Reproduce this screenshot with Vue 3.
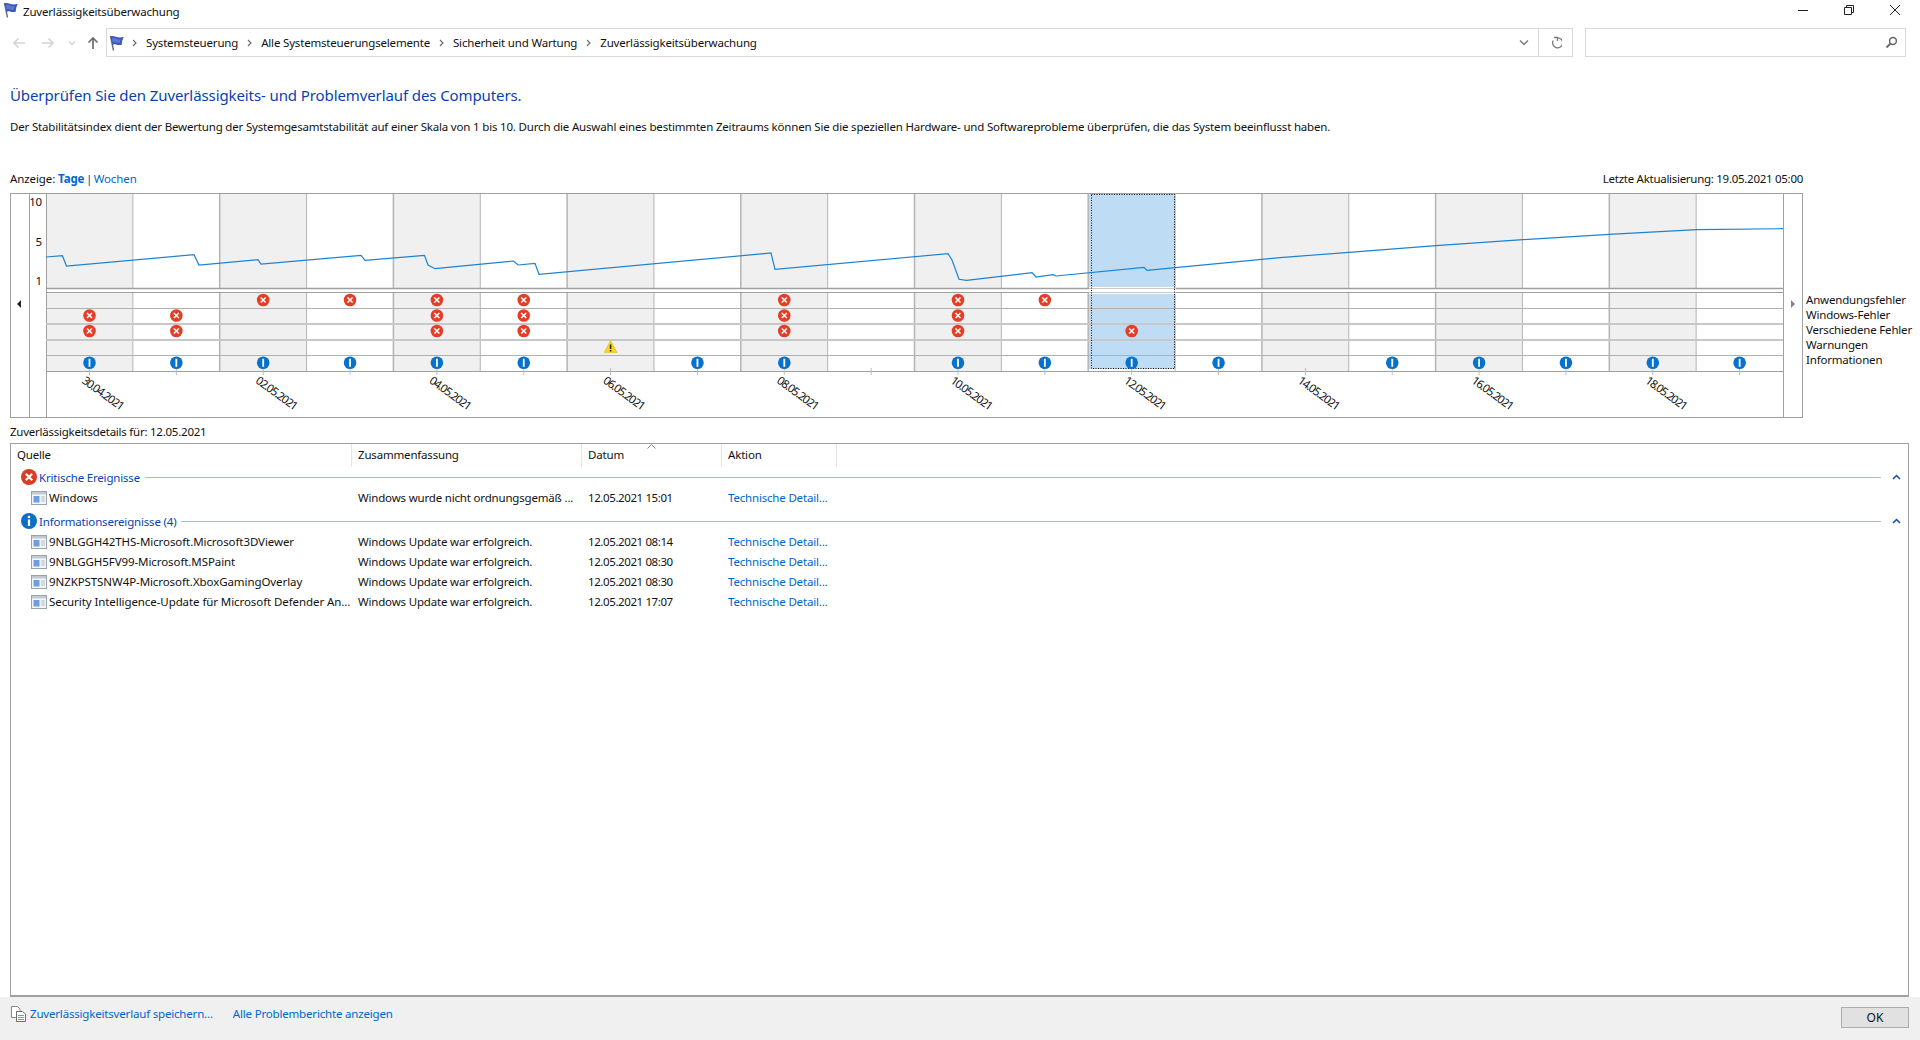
<script setup>
const P = 86.85
const X0 = 46
const cols = Array.from({ length: 20 }, (_, i) => i)
const cx = (i) => X0 + P * i + 43.5
const colX = (i) => X0 + P * i
const dates = ['30.04.2021', '02.05.2021', '04.05.2021', '06.05.2021', '08.05.2021', '10.05.2021', '12.05.2021', '14.05.2021', '16.05.2021', '18.05.2021']
const hLines = [
  { y: 288.5, c: '#a0a0a0', w: 1.5 },
  { y: 292.5, c: '#a0a0a0', w: 1 },
  { y: 308.5, c: '#b0b0b0', w: 1 },
  { y: 324, c: '#c8c8c8', w: 2 },
  { y: 340, c: '#c8c8c8', w: 2 },
  { y: 355.5, c: '#b0b0b0', w: 1 },
  { y: 371.5, c: '#a0a0a0', w: 1 }
]
const errorRows = [
  { y: 300, items: [2, 3, 4, 5, 8, 10, 11] },
  { y: 315.5, items: [0, 1, 4, 5, 8, 10] },
  { y: 331, items: [0, 1, 4, 5, 8, 10, 12] }
]
const errors = errorRows.flatMap((r) => r.items.map((i) => ({ x: cx(i), y: r.y })))
const infos = [0, 1, 2, 3, 4, 5, 7, 8, 10, 11, 12, 13, 15, 16, 17, 18, 19].map((i) => cx(i))
const line = '46,257 62.4,255.7 66.5,266 194,254.7 199,265 258,259.7 261,264 361,255.3 365,260.3 424.5,255.3 428,265 435,268.7 513.5,261 518,265 535,263.3 539,274.3 771,253 775,269.3 948,253.7 952,260 959,279.3 966.5,280.3 1032,272.7 1036,277 1053,274.7 1056,276 1144,267.3 1147,270.3 1280,257.7 1349,252.3 1436,245.7 1523,239.7 1609,234.3 1697,229.7 1783,228.7'
const legend = ['Anwendungsfehler', 'Windows-Fehler', 'Verschiedene Fehler', 'Warnungen', 'Informationen']
const crit = [{ src: 'Windows', sum: 'Windows wurde nicht ordnungsgemäß ...', date: '12.05.2021 15:01' }]
const info = [
  { src: '9NBLGGH42THS-Microsoft.Microsoft3DViewer', sum: 'Windows Update war erfolgreich.', date: '12.05.2021 08:14' },
  { src: '9NBLGGH5FV99-Microsoft.MSPaint', sum: 'Windows Update war erfolgreich.', date: '12.05.2021 08:30' },
  { src: '9NZKPSTSNW4P-Microsoft.XboxGamingOverlay', sum: 'Windows Update war erfolgreich.', date: '12.05.2021 08:30' },
  { src: 'Security Intelligence-Update für Microsoft Defender An...', sum: 'Windows Update war erfolgreich.', date: '12.05.2021 17:07' }
]
const crumbs = ['Systemsteuerung', 'Alle Systemsteuerungselemente', 'Sicherheit und Wartung', 'Zuverlässigkeitsüberwachung']
</script>

<template>
  <div class="app">
    <header class="titlebar">
      <svg class="flag" width="15" height="16" viewBox="0 0 15 16">
        <path d="M1.500 1 L4.500 15.500" stroke="#69707c" stroke-width="1.400" fill="none" />
        <path d="M1.500 1.500 C5 -.5 8 4 14.800 1.800 C13.500 5 12.500 7 13 9.500 C8 11.500 6 7.500 3.500 10.500 Z" fill="#3b57ba" />
        <path d="M3 3 C6 2 8 5 12 4.500 C11 6 10.800 7 10.800 8 C8 8 6 6 3.500 7.500 Z" fill="#5a78d2" />
      </svg>
      <span class="title">Zuverlässigkeitsüberwachung</span>
      <div class="winctl">
        <svg width="12" height="12" viewBox="0 0 12 12"><path d="M1 6.500H11" stroke="#222" /></svg>
        <svg width="12" height="12" viewBox="0 0 12 12"><path d="M1.500 3.500H8.500V10.500H1.500Z M3.500 3.500V1.500H10.500V8.500H8.500" stroke="#222" fill="none" /></svg>
        <svg width="12" height="12" viewBox="0 0 12 12"><path d="M1 1L11 11M11 1L1 11" stroke="#222" /></svg>
      </div>
    </header>

    <nav class="navbar">
      <div class="navbtns">
        <svg width="14" height="12" viewBox="0 0 14 12"><path d="M13 6H2M6.500 1.500L2 6l4.500 4.500" stroke="#d2d2d2" stroke-width="1.600" fill="none" /></svg>
        <svg class="fwd" width="14" height="12" viewBox="0 0 14 12"><path d="M1 6H12M7.500 1.500L12 6l-4.500 4.500" stroke="#d2d2d2" stroke-width="1.600" fill="none" /></svg>
        <svg class="more" width="8" height="6" viewBox="0 0 8 6"><path d="M1 1.500L4 4.500L7 1.500" stroke="#d2d2d2" stroke-width="1.300" fill="none" /></svg>
        <svg class="up" width="12" height="14" viewBox="0 0 12 14"><path d="M6 13V2M1.500 6.500L6 2l4.500 4.500" stroke="#6e6e6e" stroke-width="1.700" fill="none" /></svg>
      </div>
      <div class="address">
        <svg class="addrflag" width="15" height="16" viewBox="0 0 15 16">
          <path d="M1.500 1 L4.500 15.500" stroke="#69707c" stroke-width="1.400" fill="none" />
          <path d="M1.500 1.500 C5 -.5 8 4 14.800 1.800 C13.500 5 12.500 7 13 9.500 C8 11.500 6 7.500 3.500 10.500 Z" fill="#3b57ba" />
          <path d="M3 3 C6 2 8 5 12 4.500 C11 6 10.800 7 10.800 8 C8 8 6 6 3.500 7.500 Z" fill="#5a78d2" />
        </svg>
        <template v-for="c in crumbs" :key="c">
          <svg class="chev" width="5" height="8" viewBox="0 0 5 8"><path d="M1 1L4 4L1 7" stroke="#6d6d6d" stroke-width="1.200" fill="none" /></svg>
          <span class="crumb">{{ c }}</span>
        </template>
        <span class="spacer"></span>
        <svg class="dd" width="10" height="7" viewBox="0 0 10 7"><path d="M1 1.500L5 5.500L9 1.500" stroke="#7a7a7a" stroke-width="1.500" fill="none" /></svg>
        <div class="refresh">
          <svg width="12" height="13" viewBox="0 0 12 13"><path d="M3 1.500H6.500V5M6.500 1.800A5 5 0 1 1 2.200 4.500" stroke="#7a7a7a" stroke-width="1.300" fill="none" transform="translate(1 0)" /></svg>
        </div>
      </div>
      <div class="search">
        <svg width="13" height="13" viewBox="0 0 13 13"><circle cx="8" cy="5" r="3.400" stroke="#666" stroke-width="1.500" fill="none" /><path d="M5.500 7.500L1.500 11.500" stroke="#666" stroke-width="1.800" /></svg>
      </div>
    </nav>

    <main class="content">
      <h1 class="heading">Überprüfen Sie den Zuverlässigkeits- und Problemverlauf des Computers.</h1>
      <p class="desc">Der Stabilitätsindex dient der Bewertung der Systemgesamtstabilität auf einer Skala von 1 bis 10. Durch die Auswahl eines bestimmten Zeitraums können Sie die speziellen Hardware- und Softwareprobleme überprüfen, die das System beeinflusst haben.</p>

      <div class="viewbar">
        <span class="viewsel">Anzeige: <b class="link strong">Tage</b><span class="pipe">|</span><span class="link">Wochen</span></span>
        <span class="updated">Letzte Aktualisierung: 19.05.2021 05:00</span>
      </div>

      <div class="chartrow">
        <svg class="chart" width="1793" height="225" viewBox="10 193 1793 225">
          <rect x="10.500" y="193.500" width="1792" height="224" fill="#fff" stroke="#a0a0a0" />
          <template v-for="i in cols" :key="'s' + i">
            <template v-if="i % 2 === 0 && i !== 12">
              <rect :x="colX(i)" y="194" :width="P" height="94" fill="#f0f0f0" />
              <rect :x="colX(i)" y="293" :width="P" height="78" fill="#f0f0f0" />
            </template>
          </template>
          <rect x="1089" y="194" width="86.500" height="93" fill="#bedcf4" />
          <rect x="1089" y="294" width="86.500" height="75" fill="#bedcf4" />

          <path d="M29.500 194V417M46.500 194V417M1783.500 194V417" stroke="#a0a0a0" />
          <template v-for="i in 21" :key="'v' + i">
            <template v-if="i - 1 > 0 && i - 1 < 20">
              <path :d="`M${colX(i - 1)} 194V288M${colX(i - 1)} 293V371`" stroke="#b4b4b4" :stroke-width="i % 2 ? 1.500 : 1" />
            </template>
          </template>
          <path v-for="l in hLines" :key="l.y" :d="`M46 ${l.y}H1783`" :stroke="l.c" :stroke-width="l.w" />
          <path v-for="i in cols" :key="'t' + i" :d="`M${cx(i)} 368V375`" stroke="#bcbcbc" />

          <rect x="1089" y="287" width="86.500" height="7" fill="#fff" />
          <path d="M1089 288.500H1175.500M1089 292.500H1175.500" stroke="#c9c9c9" />
          <rect x="1091.500" y="194.500" width="83" height="174" fill="none" stroke="#000" stroke-width="1" stroke-dasharray="1 1.500" />

          <polyline :points="line" fill="none" stroke="#1c82d4" stroke-width="1.200" />

          <text class="axis" x="42" y="206" text-anchor="end">10</text>
          <text class="axis" x="42" y="246" text-anchor="end">5</text>
          <text class="axis" x="42" y="285" text-anchor="end">1</text>
          <path d="M21 300V308L17 304Z" fill="#222" />
          <path d="M1791 300V308L1795 304Z" fill="#808080" />

          <g v-for="(e, k) in errors" :key="'e' + k" :transform="`translate(${e.x} ${e.y})`">
            <circle r="6.300" fill="#e23f26" />
            <path d="M-2.500 -2.500L2.500 2.500M2.500 -2.500L-2.500 2.500" stroke="#fff" stroke-width="1.500" />
          </g>
          <g :transform="`translate(${cx(6)} 347)`">
            <path d="M0 -6.500L6.500 5.500H-6.500Z" fill="#fbd11d" stroke="#dcae10" stroke-width=".5" />
            <path d="M0 -2.500V2M0 3V4.500" stroke="#222" stroke-width="1.500" />
          </g>
          <g v-for="x in infos" :key="'i' + x" :transform="`translate(${x} 362.800)`">
            <circle r="6.300" fill="#0872ca" />
            <path d="M0 -4V4" stroke="#fff" stroke-width="1.800" />
          </g>

          <text
            v-for="(d, k) in dates"
            :key="d"
            class="date"
            :x="cx(k * 2) - 6"
            y="383"
            :transform="`rotate(36 ${cx(k * 2) - 6} 379)`"
          >{{ d }}</text>
        </svg>
        <ul class="legend">
          <li v-for="l in legend" :key="l">{{ l }}</li>
        </ul>
      </div>

      <div class="detailslabel">Zuverlässigkeitsdetails für: 12.05.2021</div>

      <section class="list">
        <div class="head grid">
          <div class="hc">Quelle</div>
          <div class="hc">Zusammenfassung</div>
          <div class="hc sortcell">Datum
            <svg class="sort" width="9" height="5" viewBox="0 0 9 5"><path d="M.5 4.500L4.500 .5L8.500 4.500" stroke="#888" fill="none" /></svg>
          </div>
          <div class="hc">Aktion</div>
        </div>

        <div class="group">
          <svg width="16" height="16" viewBox="0 0 16 16"><circle cx="8" cy="8" r="8" fill="#dc3a22" /><path d="M4.800 4.800L11.200 11.200M11.200 4.800L4.800 11.200" stroke="#fff" stroke-width="2.200" /></svg>
          <span class="gname">Kritische Ereignisse</span>
          <span class="gline"></span>
          <svg class="gcaret" width="9" height="6" viewBox="0 0 9 6"><path d="M1 5L4.500 1.500L8 5" stroke="#0f4fa8" stroke-width="1.500" fill="none" /></svg>
        </div>
        <div v-for="r in crit" :key="r.src" class="row grid first">
          <div class="src">
            <svg width="16" height="14" viewBox="0 0 16 14"><rect x=".5" y=".5" width="15" height="13" fill="#f4f6f9" stroke="#9aa3ad" /><rect x="1" y="1" width="14" height="2.500" fill="#c3c9d1" /><rect x="2.500" y="5" width="6" height="6.500" fill="#6d9fe0" /><path d="M10 6H14M10 8H14M10 10H14" stroke="#b4bcc6" /></svg>
            <span>{{ r.src }}</span>
          </div>
          <div class="cell">{{ r.sum }}</div>
          <div class="cell when">{{ r.date }}</div>
          <div class="cell link">Technische Detail...</div>
        </div>

        <div class="group second">
          <svg width="16" height="16" viewBox="0 0 16 16"><circle cx="8" cy="8" r="8" fill="#0b6fc6" /><circle cx="8" cy="4" r="1.300" fill="#fff" /><path d="M8 6.500V13" stroke="#fff" stroke-width="2.200" /></svg>
          <span class="gname">Informationsereignisse (4)</span>
          <span class="gline"></span>
          <svg class="gcaret" width="9" height="6" viewBox="0 0 9 6"><path d="M1 5L4.500 1.500L8 5" stroke="#0f4fa8" stroke-width="1.500" fill="none" /></svg>
        </div>
        <div v-for="(r, k) in info" :key="r.src" class="row grid" :class="{ first: k === 0 }">
          <div class="src">
            <svg width="16" height="14" viewBox="0 0 16 14"><rect x=".5" y=".5" width="15" height="13" fill="#f4f6f9" stroke="#9aa3ad" /><rect x="1" y="1" width="14" height="2.500" fill="#c3c9d1" /><rect x="2.500" y="5" width="6" height="6.500" fill="#6d9fe0" /><path d="M10 6H14M10 8H14M10 10H14" stroke="#b4bcc6" /></svg>
            <span>{{ r.src }}</span>
          </div>
          <div class="cell">{{ r.sum }}</div>
          <div class="cell when">{{ r.date }}</div>
          <div class="cell link">Technische Detail...</div>
        </div>
      </section>
    </main>

    <footer class="footer">
      <svg class="docicon" width="15" height="16" viewBox="0 0 15 16">
        <path d="M.5 .5H6.500L9 3V11.500H.5Z" fill="#fff" stroke="#8a8a8a" />
        <path d="M5.500 5.500H11.500L14.500 8V15.500H5.500Z" fill="#fff" stroke="#6f6f6f" />
        <path d="M7 9.500H13M7 11.500H13M7 13.500H13" stroke="#6d9bd6" />
      </svg>
      <span class="link flink">Zuverlässigkeitsverlauf speichern...</span>
      <span class="link flink two">Alle Problemberichte anzeigen</span>
      <span class="spacer"></span>
      <button class="ok" type="button">OK</button>
    </footer>
  </div>
</template>

<style>
html, body { margin: 0; background: #fff; }
</style>

<style scoped>
.app {
  width: 1920px;
  height: 1040px;
  display: flex;
  flex-direction: column;
  overflow: hidden;
  background: #fff;
  color: #111;
  font-family: "Noto Sans", "Liberation Sans", sans-serif;
  font-size: 11.5px;
  letter-spacing: -0.18px;
}
.titlebar { height: 28px; flex: none; display: flex; align-items: flex-start; padding-left: 3px; }
.flag { margin-top: 2px; }
.title { margin-left: 5px; line-height: 24px; }
.winctl { margin-left: auto; display: flex; gap: 34px; padding: 4px 19px 0 0; }
.navbar { height: 29px; flex: none; display: flex; align-items: stretch; }
.navbtns { width: 106px; flex: none; display: flex; align-items: center; padding-left: 12px; box-sizing: border-box; }
.fwd { margin-left: 15px; }
.more { margin-left: 13px; }
.up { margin-left: 11px; }
.address {
  width: 1467px; box-sizing: border-box; flex: none;
  border: 1px solid #d9d9d9; display: flex; align-items: center; padding-left: 2px;
}
.addrflag { margin-right: 8px; }
.chev { margin: 0 9px 0 0; }
.crumb { margin-right: 9px; }
.spacer { flex: 1; }
.dd { margin-right: 9px; }
.refresh { width: 33px; height: 100%; border-left: 1px solid #d9d9d9; display: flex; align-items: center; justify-content: center; }
.search {
  margin-left: 12px; width: 321px; box-sizing: border-box;
  border: 1px solid #d9d9d9; display: flex; align-items: center; justify-content: flex-end; padding-right: 7px;
}
.content { flex: 1; min-height: 0; display: flex; flex-direction: column; padding: 0 11px 0 10px; }
.heading { margin: 27px 0 0; font-size: 15px; font-weight: 400; line-height: 22px; color: #0a3fb0; letter-spacing: -0.1px; }
.desc { margin: 13px 0 0; line-height: 16px; white-space: nowrap; }
.viewbar { margin-top: 36px; width: 1793px; line-height: 16px; display: flex; justify-content: space-between; }
.viewsel { letter-spacing: -0.1px; }
.pipe { margin: 0 1.5px; color: #0b3f8e; }
.updated { letter-spacing: -0.28px; }
.link { color: #0066cc; }
.strong { font-weight: 700; }
.chartrow { margin-top: 6px; display: flex; height: 225px; flex: none; }
.chart { flex: none; display: block; }
.axis { font-size: 11.500px; fill: #111; }
.date { font-size: 11.500px; fill: #111; letter-spacing: -1.1px; }
.legend { list-style: none; margin: 99px 0 0 3px; padding: 0; line-height: 15px; white-space: nowrap; }
.detailslabel { margin-top: 6px; line-height: 16px; letter-spacing: -0.24px; }
.list { margin-top: 3px; flex: 1; min-height: 0; border: 1px solid #a0a0a0; border-width: 1px 1px 2px 1px; box-sizing: border-box; }
.grid { display: grid; grid-template-columns: 341px 230px 140px 115px; }
.head { height: 23px; }
.hc { padding-left: 6px; line-height: 22px; border-right: 1px solid #e5e5e5; position: relative; }
.sort { position: absolute; left: 65px; top: 0; }
.group { height: 20px; display: flex; align-items: center; padding-left: 10px; }
.group.second { margin-top: 3px; }
.gname { margin-left: 2px; color: #0a3fb0; }
.gline { flex: 1; height: 1px; background: #a8bce0; margin: 0 6px 0 5px; }
.gcaret { margin: 0 7px 0 5px; }
.row { height: 20px; align-items: center; line-height: 20px; white-space: nowrap; }
.row.first { margin-top: 1px; }
.src { padding-left: 20px; display: flex; align-items: center; gap: 2px; overflow: hidden; letter-spacing: -0.08px; }
.cell { padding-left: 6px; overflow: hidden; }
.when { letter-spacing: -0.4px; }
.footer { height: 43px; flex: none; background: #f0f0f0; display: flex; align-items: flex-start; padding: 0 11px 0 11px; box-sizing: border-box; }
.docicon { margin-top: 9px; }
.flink { margin: 9px 0 0 4px; line-height: 16px; }
.flink.two { margin-left: 20px; }
.ok {
  margin-top: 10px; width: 68px; height: 21px; padding: 0;
  border: 1px solid #adadad; background: #e1e1e1; color: #111;
  font: inherit; font-size: 12px;
}
</style>
